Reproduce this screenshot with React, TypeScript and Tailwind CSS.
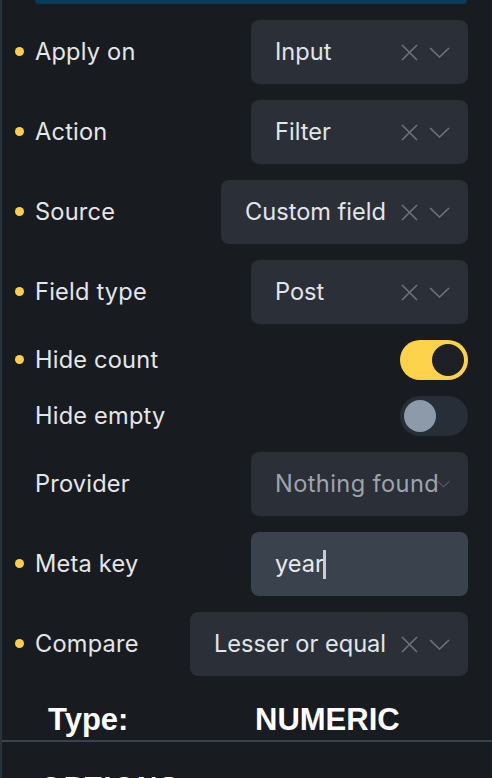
import React from "react";

const Dot = () => (
  <span className="block w-[9px] h-[9px] rounded-full bg-[#fdd14a] shrink-0" />
);

const XIcon = () => (
  <svg width="17" height="17" viewBox="0 0 17 17" className="shrink-0">
    <path d="M1 1 L16 16 M16 1 L1 16" stroke="#6c737d" strokeWidth="1.6" fill="none" />
  </svg>
);

const Chevron = ({ w = 21, h = 11 }: { w?: number; h?: number }) => (
  <svg width={w} height={h} viewBox="0 0 21 11" className="shrink-0">
    <path d="M1 1 L10.5 10 L20 1" stroke="#6c737d" strokeWidth="1.6" fill="none" />
  </svg>
);

function Label({ text, dot }: { text: string; dot?: boolean }) {
  return (
    <div className="flex items-center">
      <div className="w-[33px] flex justify-start pl-[13px]">{dot ? <Dot /> : null}</div>
      <span className="text-[23.6px] text-[#e4e6ea] tracking-[0.2px]">{text}</span>
    </div>
  );
}

function Select({ value, width }: { value: string; width: string }) {
  return (
    <div className={`${width} h-[64px] rounded-[8px] bg-[#2a2f38] flex items-center pl-[24px] pr-[18px]`}>
      <span className="flex-1 text-[23.6px] text-[#e2e5ea] whitespace-nowrap">{value}</span>
      <div className="flex items-center gap-[11px]">
        <XIcon />
        <Chevron />
      </div>
    </div>
  );
}

function Row({ children }: { children: React.ReactNode }) {
  return <div className="flex items-center justify-between pr-[24px]">{children}</div>;
}

export default function App() {
  return (
    <div
      className="w-[492px] h-[778px] overflow-hidden bg-[#181b1f] border-l-[2px] border-[#2c323a] flex flex-col"
      style={{ fontFamily: "Inter, 'Noto Sans', sans-serif" }}
    >
      <div className="ml-[33px] mr-[25px] h-[4px] bg-[#0a3a5c] rounded-b-[6px] shrink-0" />
      <div className="flex flex-col gap-[16px] pt-[16px]">
        <Row>
          <Label text="Apply on" dot />
          <Select value="Input" width="w-[217px]" />
        </Row>
        <Row>
          <Label text="Action" dot />
          <Select value="Filter" width="w-[217px]" />
        </Row>
        <Row>
          <Label text="Source" dot />
          <Select value="Custom field" width="w-[247px]" />
        </Row>
        <Row>
          <Label text="Field type" dot />
          <Select value="Post" width="w-[217px]" />
        </Row>
        <Row>
          <Label text="Hide count" dot />
          <div className="w-[68px] h-[40px] rounded-full bg-[#fed34c] flex items-center justify-end pr-[4px]">
            <div className="w-[32px] h-[32px] rounded-full bg-[#1d2025]" />
          </div>
        </Row>
        <Row>
          <Label text="Hide empty" />
          <div className="w-[68px] h-[40px] rounded-full bg-[#282e37] flex items-center pl-[4px]">
            <div className="w-[32px] h-[32px] rounded-full bg-[#8d9aaa]" />
          </div>
        </Row>
        <Row>
          <Label text="Provider" />
          <div className="relative w-[217px] h-[64px] rounded-[8px] bg-[#2a2f38] flex items-center pl-[24px] overflow-hidden">
            <span className="text-[23.6px] text-[#9ea4ad] whitespace-nowrap tracking-[0.4px]">Nothing found</span>
            <div className="absolute right-[18px] top-[28px]">
              <Chevron w={13} h={8} />
            </div>
          </div>
        </Row>
        <Row>
          <Label text="Meta key" dot />
          <div className="w-[217px] h-[64px] rounded-[8px] bg-[#3a424d] flex items-center pl-[24px]">
            <span className="text-[23.6px] text-[#e8eaee]">year</span>
            <span className="w-[3px] h-[29px] bg-[#c9ccd2] ml-[-1px]" />
          </div>
        </Row>
        <Row>
          <Label text="Compare" dot />
          <Select value="Lesser or equal" width="w-[278px]" />
        </Row>
      </div>
      <div
        className="flex items-start h-[64px] pt-[27px] shrink-0"
        style={{ fontFamily: "'Liberation Sans', Arial, sans-serif" }}
      >
        <span className="ml-[46px] w-[207px] text-[31px] leading-[34px] font-bold text-white">Type:</span>
        <span className="text-[31px] leading-[34px] font-bold text-white">NUMERIC</span>
      </div>
      <div className="h-[2px] bg-[#3a424d] shrink-0" />
      <div
        className="pt-[24px] pl-[38px] text-[28px] font-bold text-white tracking-[2px]"
        style={{ fontFamily: "'Liberation Sans', Arial, sans-serif" }}
      >
        OPTIONS
      </div>
    </div>
  );
}
